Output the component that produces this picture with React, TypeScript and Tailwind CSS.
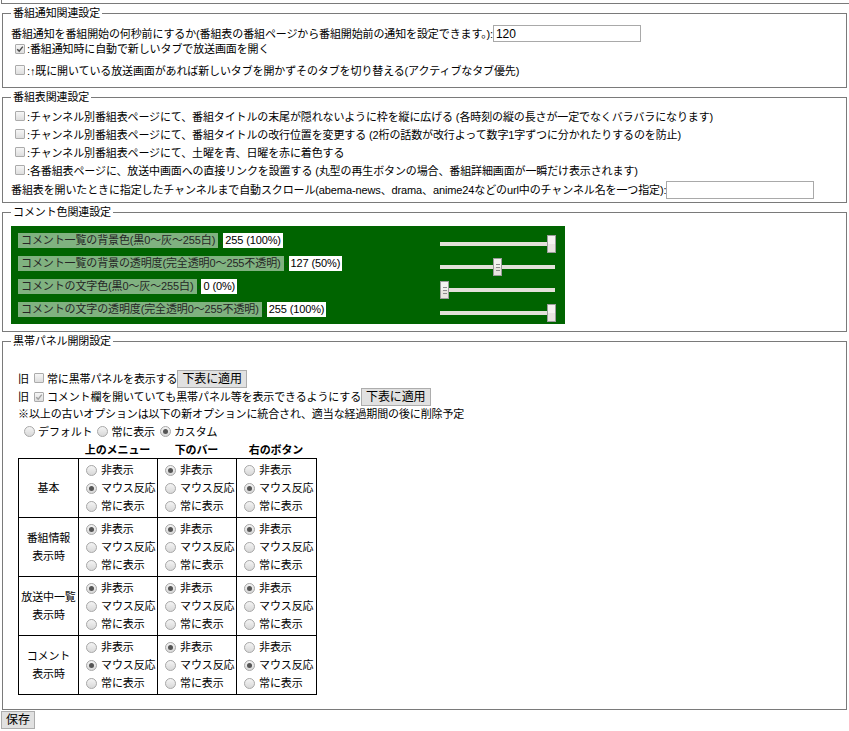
import React from "react";

function Check({ checked = false, dim = false }: { checked?: boolean; dim?: boolean }) {
  return (
    <span className="inline-flex h-[10px] w-[10px] shrink-0 items-center justify-center rounded-[1px] border border-[#ababab] bg-linear-to-b from-[#f6f6f6] to-[#dedede]">
      {checked && (
        <svg width="8" height="8" viewBox="0 0 8 8">
          <path d="M1.2 4.2 L3.2 6.1 L6.8 1.6" fill="none" stroke={dim ? "#a0a0a0" : "#4a4a4a"} strokeWidth="1.4" />
        </svg>
      )}
    </span>
  );
}

function Radio({ checked = false }: { checked?: boolean }) {
  return (
    <span className="inline-flex h-[11px] w-[11px] shrink-0 items-center justify-center rounded-full border border-[#a8a8a8] bg-linear-to-b from-[#f4f4f4] to-[#d8d8d8]">
      {checked && <span className="h-[5px] w-[5px] rounded-full bg-[#555]" />}
    </span>
  );
}

function Box({ title, className, children }: { title: string; className?: string; children: React.ReactNode }) {
  return (
    <fieldset className={"mx-[2px] border border-[#7a7a7a] px-[8px] " + (className ?? "")}>
      <legend className="px-[2px] leading-[18px]">{title}</legend>
      {children}
    </fieldset>
  );
}

function Slider({ value, grip = false }: { value: number; grip?: boolean }) {
  const left = Math.round((value / 255) * 107);
  return (
    <div className="relative h-[4px] w-[115px] bg-[#e3e0da]">
      <div
        className="absolute top-[-7px] flex h-[18px] w-[9px] flex-col items-center justify-center gap-[2px] border border-[#9c9c9c] bg-linear-to-b from-[#f4f2f0] from-50% to-[#e8e4e0] to-50%"
        style={{ left }}
      >
        {grip && (
          <>
            <span className="h-px w-[4px] bg-[#8c8c8c]" />
            <span className="h-px w-[4px] bg-[#8c8c8c]" />
            <span className="h-px w-[4px] bg-[#8c8c8c]" />
          </>
        )}
      </div>
    </div>
  );
}

const colorRows = [
  { label: "コメント一覧の背景色(黒0～灰～255白)", value: "255 (100%)", v: 255, grip: false },
  { label: "コメント一覧の背景の透明度(完全透明0～255不透明)", value: "127 (50%)", v: 127, grip: true },
  { label: "コメントの文字色(黒0～灰～255白)", value: "0 (0%)", v: 0, grip: true },
  { label: "コメントの文字の透明度(完全透明0～255不透明)", value: "255 (100%)", v: 255, grip: false },
];

const opts = ["非表示", "マウス反応", "常に表示"];

const panelRows = [
  { name: ["基本"], sel: [1, 0, 1] },
  { name: ["番組情報", "表示時"], sel: [0, 0, 0] },
  { name: ["放送中一覧", "表示時"], sel: [0, 0, 0] },
  { name: ["コメント", "表示時"], sel: [1, 0, 1] },
];

function Btn({ children }: { children: React.ReactNode }) {
  return (
    <span className="inline-flex h-[18px] items-center border border-[#adadad] bg-[#e1e1e1] px-[4px] text-[12px] leading-[16px]">
      {children}
    </span>
  );
}

export default function App() {
  return (
    <div className="min-h-[731px] bg-white font-['Liberation_Sans','Noto_Sans_CJK_JP',sans-serif] text-[11px] leading-[18px] tracking-[-0.12px] text-black">
      <div className="ml-px h-[4px] border-b border-l border-[#7a7a7a]" />

      <Box title="番組通知関連設定" className="pt-[3px] pb-[9px]">
        <div className="flex h-[17px] items-center">
          <span>番組通知を番組開始の何秒前にするか(番組表の番組ページから番組開始前の通知を設定できます。):</span>
          <span className="flex h-[17px] w-[148px] items-center border border-[#a9a9a9] px-[2px] text-[12px]">120</span>
        </div>
        <div className="flex h-[14px] items-center">
          <span className="ml-[4px] mr-[2px]"><Check checked /></span>
          <span>:番組通知時に自動で新しいタブで放送画面を開く</span>
        </div>
        <div className="mt-[8px] flex h-[14px] items-center">
          <span className="ml-[4px] mr-[2px]"><Check /></span>
          <span>:↑既に開いている放送画面があれば新しいタブを開かずそのタブを切り替える(アクティブなタブ優先)</span>
        </div>
      </Box>

      <Box title="番組表関連設定" className="pt-[2px] pb-[3px]">
        {[
          ":チャンネル別番組表ページにて、番組タイトルの末尾が隠れないように枠を縦に広げる (各時刻の縦の長さが一定でなくバラバラになります)",
          ":チャンネル別番組表ページにて、番組タイトルの改行位置を変更する (2桁の話数が改行よって数字1字ずつに分かれたりするのを防止)",
          ":チャンネル別番組表ページにて、土曜を青、日曜を赤に着色する",
          ":各番組表ページに、放送中画面への直接リンクを設置する (丸型の再生ボタンの場合、番組詳細画面が一瞬だけ表示されます)",
        ].map((t) => (
          <div key={t} className="flex h-[18px] items-center">
            <span className="ml-[4px] mr-[2px]"><Check /></span>
            <span>{t}</span>
          </div>
        ))}
        <div className="flex h-[19px] items-center">
          <span>番組表を開いたときに指定したチャンネルまで自動スクロール(abema-news、drama、anime24などのurl中のチャンネル名を一つ指定):</span>
          <span className="h-[18px] w-[148px] border border-[#a9a9a9]" />
        </div>
      </Box>

      <Box title="コメント色関連設定" className="pt-[5px] pb-[7px]">
        <div className="w-[554px] bg-[#006400] pl-[7px] pr-[10px] pt-[6px]">
          {colorRows.map((r) => (
            <div key={r.label} className="flex h-[23px] items-start justify-between">
              <div className="mt-px flex h-[15px] items-center">
                <span className="h-[15px] bg-[#80b280] px-[3px] leading-[15px] text-[#262626]">{r.label}</span>
                <span className="px-[1px] leading-[15px] text-[#333]">:</span>
                <span className="h-[15px] bg-white px-[2px] leading-[15px]">{r.value}</span>
              </div>
              <div className="mt-[10px]">
                <Slider value={r.v} grip={r.grip} />
              </div>
            </div>
          ))}
        </div>
      </Box>

      <Box title="黒帯パネル開閉設定" className="pt-[2px] pb-[14px]">
        <div className="ml-[7px]">
          <div className="h-[18px]" />
          <div className="flex h-[18px] items-center">
            <span>旧</span>
            <span className="ml-[5px] mr-[3px]"><Check /></span>
            <span>常に黒帯パネルを表示する</span>
            <Btn>下表に適用</Btn>
          </div>
          <div className="flex h-[18px] items-center">
            <span>旧</span>
            <span className="ml-[5px] mr-[3px]"><Check checked dim /></span>
            <span>コメント欄を開いていても黒帯パネル等を表示できるようにする</span>
            <Btn>下表に適用</Btn>
          </div>
          <div className="flex h-[16px] items-center">※以上の古いオプションは以下の新オプションに統合され、適当な経過期間の後に削除予定</div>
          <div className="flex h-[19px] items-center gap-[3px] pl-[6px]">
            <Radio />
            <span className="mr-[2px]">デフォルト</span>
            <Radio />
            <span className="mr-[2px]">常に表示</span>
            <Radio checked />
            <span>カスタム</span>
          </div>
          <div className="grid h-[17px] grid-cols-[60px_79px_79px_80px] items-center text-center font-bold">
            <span />
            <span>上のメニュー</span>
            <span>下のバー</span>
            <span>右のボタン</span>
          </div>
          <table className="w-[298px] table-fixed border-collapse border border-black">
            <colgroup>
              <col className="w-[60px]" />
              <col className="w-[79px]" />
              <col className="w-[79px]" />
              <col className="w-[80px]" />
            </colgroup>
            <tbody>
              {panelRows.map((row, i) => (
                <tr key={i} className="h-[59px]">
                  <td className="border border-black p-0 text-center align-middle">
                    {row.name.map((n) => (
                      <div key={n}>{n}</div>
                    ))}
                  </td>
                  {row.sel.map((s, j) => (
                    <td key={j} className="border border-black p-0 pl-[7px] align-middle">
                      {opts.map((o, k) => (
                        <div key={o} className="flex h-[18px] items-center gap-[4px]">
                          <Radio checked={k === s} />
                          <span>{o}</span>
                        </div>
                      ))}
                    </td>
                  ))}
                </tr>
              ))}
            </tbody>
          </table>
        </div>
      </Box>

      <div className="ml-[1px] mt-[1px]">
        <Btn>保存</Btn>
      </div>
    </div>
  );
}
